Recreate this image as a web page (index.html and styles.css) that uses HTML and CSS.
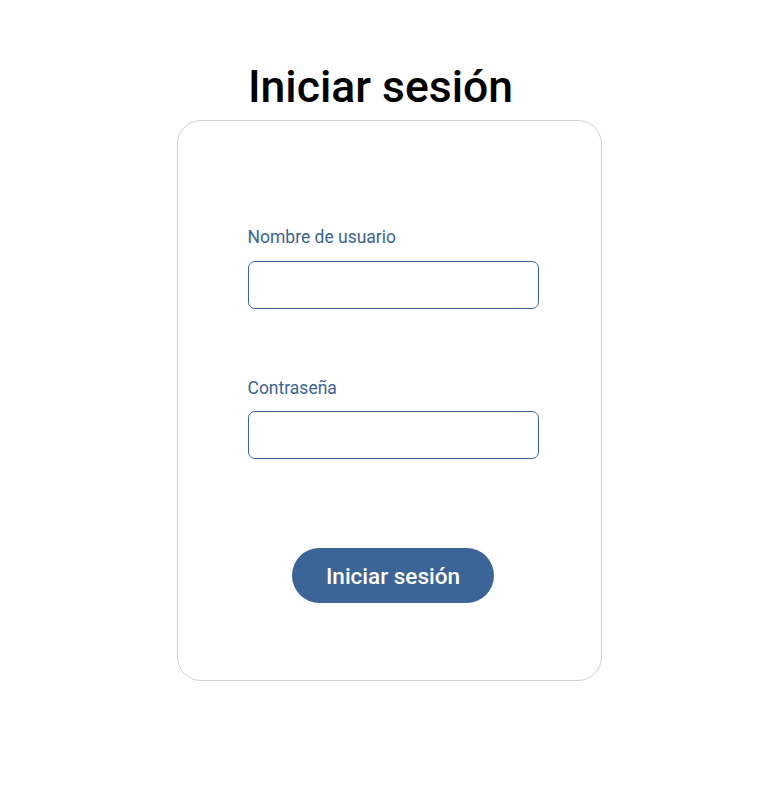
FILE: index.html
```html
<!DOCTYPE html>
<html lang="es">
<head>
<meta charset="utf-8">
<title>Iniciar sesión</title>
<link rel="stylesheet" href="styles.css">
</head>
<body>
<main class="page">
  <h1 class="title">Iniciar sesión</h1>
  <form class="card">
    <div class="field">
      <label class="label" for="user">Nombre de usuario</label>
      <input class="input" id="user" type="text">
    </div>
    <div class="field field-second">
      <label class="label" for="pass">Contraseña</label>
      <input class="input" id="pass" type="password">
    </div>
    <div class="actions">
      <button class="btn" type="button">Iniciar sesión</button>
    </div>
  </form>
</main>
</body>
</html>
```
FILE: styles.css
```css
html, body {
  margin: 0;
  padding: 0;
  background: #ffffff;
}
body {
  font-family: Roboto, "Liberation Sans", sans-serif;
}
.page {
  display: flex;
  flex-direction: column;
  align-items: center;
}
.title {
  margin: 61px 19px 0 0;
  font-size: 44.5px;
  font-weight: 500;
  line-height: normal;
  color: #000;
}
.card {
  box-sizing: border-box;
  width: 425px;
  height: 561px;
  margin: 7px 2px 0 0;
  border: 1px solid #cfcfcf;
  border-radius: 24px;
  padding: 106px 0 0 70px;
  display: flex;
  flex-direction: column;
}
.field {
  display: flex;
  flex-direction: column;
}
.field-second {
  margin-top: 69px;
}
.label {
  font-size: 17.5px;
  font-weight: 400;
  line-height: normal;
  color: #3a6494;
  margin-bottom: 13.5px;
}
.input {
  box-sizing: border-box;
  width: 291px;
  height: 48px;
  border: 1px solid #3a6494;
  border-radius: 7px;
  padding: 0 10px;
  font: inherit;
  outline: none;
}
.actions {
  width: 291px;
  display: flex;
  justify-content: center;
  margin-top: 89px;
}
.btn {
  width: 202px;
  height: 55px;
  border: none;
  border-radius: 28px;
  background: #3b6596;
  color: #fff;
  font-family: Roboto, "Liberation Sans", sans-serif;
  font-size: 22.5px;
  font-weight: 500;
  cursor: pointer;
}
```
